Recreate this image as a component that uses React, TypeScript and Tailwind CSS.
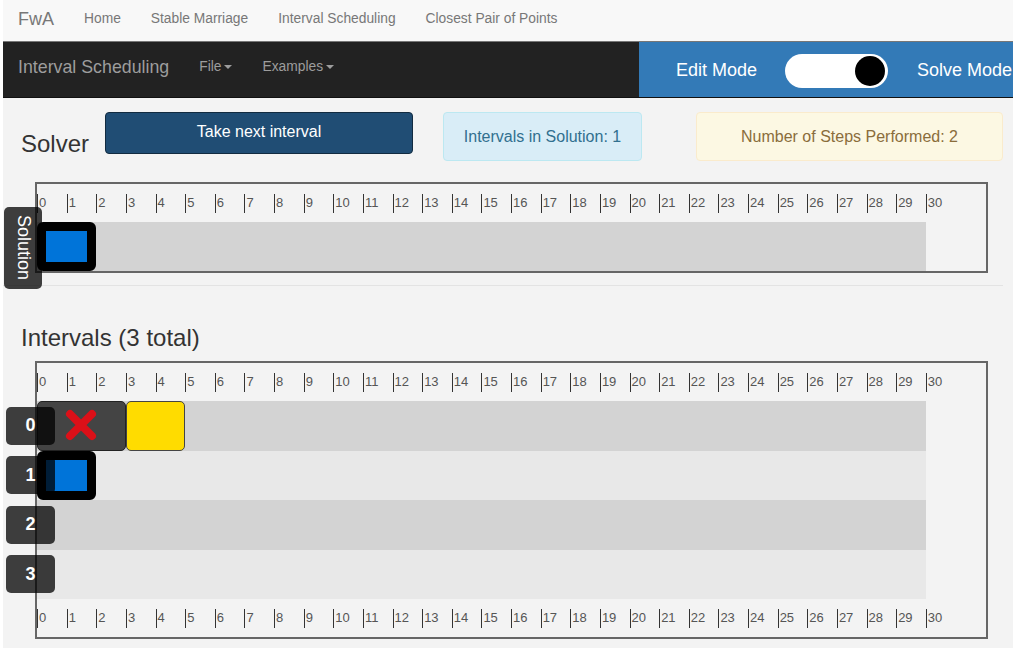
import React from 'react';

const UNIT = 889 / 30;

type Interval = { start: number; end: number; kind: 'selected' | 'discarded' | 'pending' };

const rows: Interval[][] = [
  [
    { start: 0, end: 3, kind: 'discarded' },
    { start: 3, end: 5, kind: 'pending' },
  ],
  [{ start: 0, end: 2, kind: 'selected' }],
  [],
  [],
];

const Caret = () => (
  <span className="ml-[3px] inline-block h-0 w-0 border-x-[4px] border-t-[4px] border-x-transparent border-t-[#9d9d9d] align-middle" />
);

const Axis = () => (
  <div className="flex h-[38px] items-center">
    {Array.from({ length: 31 }, (_, i) => (
      <div key={i} className="flex w-[29.633px] shrink-0 items-center">
        <span className="h-[19px] w-px bg-[#333]" />
        <span className="pl-[1px] text-[13px] leading-[20px] text-[#555]">{i}</span>
      </div>
    ))}
  </div>
);

const IntervalBox = ({ iv }: { iv: Interval }) => {
  const style = { left: iv.start * UNIT, width: (iv.end - iv.start) * UNIT };
  if (iv.kind === 'selected') {
    return (
      <div
        className="absolute top-0 h-full rounded-[6px] border-[9px] border-black bg-[#0074d9]"
        style={style}
      />
    );
  }
  if (iv.kind === 'discarded') {
    return (
      <div
        className="absolute top-0 flex h-full items-center justify-center rounded-[5px] border border-[#222] bg-[#444]"
        style={style}
      >
        <svg width="32" height="32" viewBox="0 0 32 32" className="-mt-[1px]">
          <path d="M5 5 L27 27 M27 5 L5 27" stroke="#dc1018" strokeWidth="8" strokeLinecap="round" />
        </svg>
      </div>
    );
  }
  return (
    <div
      className="absolute top-0 h-full rounded-[5px] border border-[#444] bg-[#ffdc00]"
      style={style}
    />
  );
};

export default function App() {
  return (
    <div className="min-h-screen overflow-hidden bg-white pl-[3px] font-['Liberation_Sans',Arial,sans-serif]">
      <div className="min-h-[648px] w-[1010px] bg-[#f3f3f3]">
        {/* top navbar */}
        <nav className="flex h-[42px] items-center border-b border-[#777] bg-[#f8f8f8] pb-[3px] text-[#777]">
          <span className="px-[15px] text-[18px]">FwA</span>
          {['Home', 'Stable Marriage', 'Interval Scheduling', 'Closest Pair of Points'].map((l) => (
            <a key={l} className="px-[15px] text-[13.8px]">
              {l}
            </a>
          ))}
        </nav>

        {/* app bar */}
        <div className="flex h-[56px] border-b border-[#111]">
          <div className="flex flex-1 items-center bg-[#222] pb-[5px] text-[#9d9d9d]">
            <span className="px-[15px] text-[17.8px]">Interval Scheduling</span>
            <span className="px-[15px] text-[13.8px]">
              File
              <Caret />
            </span>
            <span className="px-[15px] text-[13.8px]">
              Examples
              <Caret />
            </span>
          </div>
          <div className="flex w-[374px] items-center overflow-hidden whitespace-nowrap bg-[#337ab7] pl-[37px] pt-[2px] text-[18px] text-white">
            <span>Edit Mode</span>
            <div className="relative ml-[28px] h-[34px] w-[103px] shrink-0 rounded-full bg-white">
              <span className="absolute right-[3px] top-[2px] h-[30px] w-[30px] rounded-full bg-black" />
            </div>
            <span className="ml-[29px]">Solve Mode</span>
          </div>
        </div>

        <main className="pl-[18px] pt-[14px]">
          {/* solver controls */}
          <div className="flex items-start">
            <h3 className="mt-[19px] w-[84px] text-[24px] leading-[26px] text-[#333]">Solver</h3>
            <button className="h-[42px] w-[308px] rounded-[4px] border border-[#122b40] bg-[#204d74] pb-[2px] text-[16px] text-white">
              Take next interval
            </button>
            <div className="ml-[30px] flex h-[49px] w-[199px] items-center justify-center rounded-[4px] border border-[#bce8f1] bg-[#d9edf7] text-[16px] text-[#31708f]">
              Intervals in Solution: 1
            </div>
            <div className="ml-[54px] flex h-[49px] w-[307px] items-center justify-center rounded-[4px] border border-[#faebcc] bg-[#fcf8e3] text-[16px] text-[#8a6d3b]">
              Number of Steps Performed: 2
            </div>
          </div>

          {/* solution timeline */}
          <div className="-ml-[18px] mt-[21px] w-[1000px] border-b border-[#e3e3e3] pb-[12px] pl-[18px]">
            <div className="relative">
              <div className="ml-[14px] w-[953px] border-2 border-[#666]">
                <Axis />
                <div className="relative h-[49px] w-[889px] bg-[#d3d3d3]">
                  <IntervalBox iv={{ start: 0, end: 2, kind: 'selected' }} />
                </div>
              </div>
              <div className="absolute left-[-17px] top-[25px] z-10 flex h-[82px] w-[38px] items-center justify-center rounded-[5px] bg-black/75 text-[18px] text-white [writing-mode:vertical-rl]">
                Solution
              </div>
            </div>
          </div>

          {/* intervals */}
          <h3 className="mt-[39px] text-[24px] leading-[26px] text-[#333]">Intervals (3 total)</h3>
          <div className="ml-[14px] mt-[10px] w-[953px] border-2 border-[#666]">
            <Axis />
            {rows.map((row, i) => (
              <div
                key={i}
                className={`relative h-[49.5px] w-[889px] ${i % 2 === 0 ? 'bg-[#d3d3d3]' : 'bg-[#e8e8e8]'}`}
              >
                {row.map((iv, j) => (
                  <IntervalBox key={j} iv={iv} />
                ))}
                <div className="absolute left-[-31px] top-1/2 z-10 flex h-[38px] w-[49px] -translate-y-1/2 items-center justify-center rounded-[5px] bg-black/75 text-[18px] font-bold text-white">
                  {i}
                </div>
              </div>
            ))}
            <Axis />
          </div>
        </main>
      </div>
    </div>
  );
}
